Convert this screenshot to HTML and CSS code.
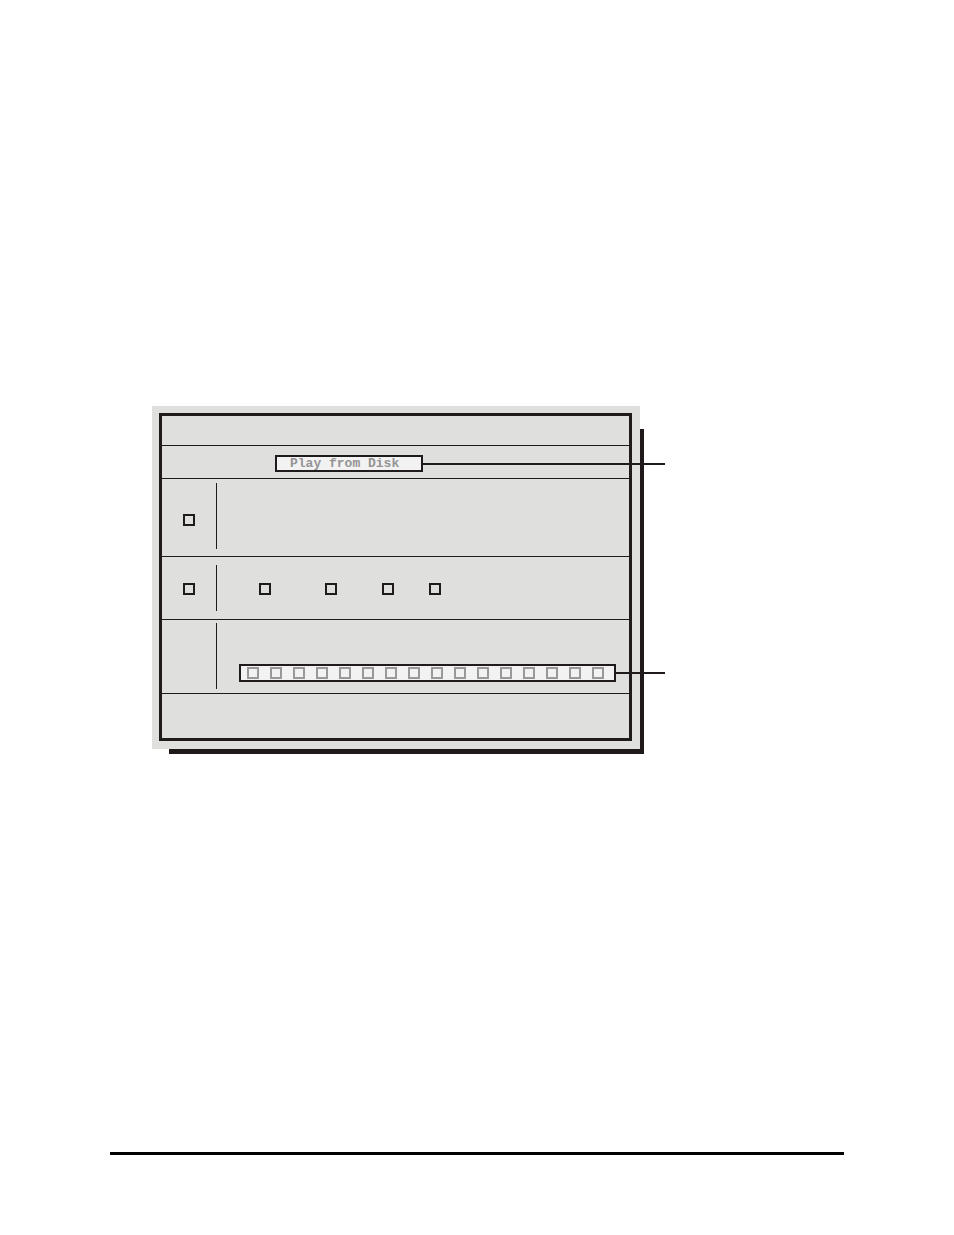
FILE: index.html
```html
<!DOCTYPE html>
<html lang="en">
<head>
    <meta charset="UTF-8">
    <meta name="viewport" content="width=device-width, initial-scale=1.0">
    <title>Play from Disk</title>
    <link rel="stylesheet" href="styles.css">
</head>
<body>
    <main class="page">
        <div class="screen">
            <form class="frame">
                <div class="row header"></div>

                <div class="row mode">
                    <input class="mode-name" type="text" value="Play from Disk" aria-label="Mode">
                    <span class="callout"></span>
                </div>

                <div class="row source">
                    <div class="side"><input class="box" type="checkbox" aria-label="Source"></div>
                </div>

                <div class="row options">
                    <div class="side"><input class="box" type="checkbox" aria-label="Options"></div>
                    <div class="choices">
                        <input class="box" type="checkbox" aria-label="Option 1">
                        <input class="box" type="checkbox" aria-label="Option 2">
                        <input class="box" type="checkbox" aria-label="Option 3">
                        <input class="box" type="checkbox" aria-label="Option 4">
                    </div>
                </div>

                <div class="row tracks">
                    <div class="side"></div>
                    <div class="track-line">
                        <div class="strip">
                            <input class="box light" type="checkbox" aria-label="Track 1">
                            <input class="box light" type="checkbox" aria-label="Track 2">
                            <input class="box light" type="checkbox" aria-label="Track 3">
                            <input class="box light" type="checkbox" aria-label="Track 4">
                            <input class="box light" type="checkbox" aria-label="Track 5">
                            <input class="box light" type="checkbox" aria-label="Track 6">
                            <input class="box light" type="checkbox" aria-label="Track 7">
                            <input class="box light" type="checkbox" aria-label="Track 8">
                            <input class="box light" type="checkbox" aria-label="Track 9">
                            <input class="box light" type="checkbox" aria-label="Track 10">
                            <input class="box light" type="checkbox" aria-label="Track 11">
                            <input class="box light" type="checkbox" aria-label="Track 12">
                            <input class="box light" type="checkbox" aria-label="Track 13">
                            <input class="box light" type="checkbox" aria-label="Track 14">
                            <input class="box light" type="checkbox" aria-label="Track 15">
                            <input class="box light" type="checkbox" aria-label="Track 16">
                        </div>
                        <span class="callout"></span>
                    </div>
                </div>

                <div class="row status"></div>
            </form>
        </div>
        <hr class="page-rule">
    </main>
</body>
</html>
```

FILE: styles.css
```css
* {
    box-sizing: border-box;
}
body {
    margin: 0;
    background: #fff;
    font-family: "Liberation Mono", "Courier New", monospace;
}
.page {
    padding: 406px 110px 80px;
}

/* panel with the offset shadow behind it */
.screen {
    position: relative;
    isolation: isolate;
    max-width: 488px;
    margin-left: 42px;
    padding: 7px 8px 8px 7px;
}
.screen::before {
    content: "";
    position: absolute;
    z-index: -2;
    top: 23px;
    right: -4px;
    bottom: -5px;
    left: 17px;
    background: #1f1a19;
}
.screen::after {
    content: "";
    position: absolute;
    z-index: -1;
    inset: 0;
    background: #dfdfdd;
}
.frame {
    margin: 0;
    border: 3px solid #1f1a1b;
}
.row {
    display: flex;
    border-bottom: 1px solid #1f1a1b;
}
.header {
    min-height: 30px;
}
.mode {
    min-height: 33px;
    align-items: center;
    padding: 3px 0 0 113px;
}
.mode-name {
    width: 148px;
    height: 17px;
    padding: 0 0 0 13px;
    border: 2px solid #1f1a1b;
    border-radius: 0;
    background: #f2f2f2;
    color: #949494;
    font: bold 13px/13px "Liberation Mono", "Courier New", monospace;
}

/* leader line running out past the panel edge */
.callout {
    flex: 1;
    height: 2px;
    margin-right: -36px;
    background: #1f1a1b;
}
.source {
    min-height: 78px;
    padding: 4px 0 7px;
}
.options {
    min-height: 63px;
    padding: 8px 0;
}
.tracks {
    min-height: 74px;
    padding: 3px 0 4px;
}
.status {
    min-height: 44px;
    border-bottom: 0;
}
.side {
    display: flex;
    flex: none;
    align-items: center;
    justify-content: center;
    width: 55px;
    border-right: 1px solid #1f1a1b;
}
.box {
    appearance: none;
    flex: none;
    width: 12px;
    height: 12px;
    margin: 0;
    border: 2px solid #1f1a1b;
    border-radius: 0;
}
.box.light {
    border-color: #999;
}
.source .side {
    padding-top: 7px;
}
.options .side,
.choices {
    padding-top: 2px;
}
.choices {
    display: grid;
    grid-template-columns: 66px 57px 47px 12px;
    align-items: center;
    margin-left: 42px;
}
.track-line {
    display: flex;
    flex: 1;
    align-items: center;
    align-self: flex-end;
    margin: 0 0 7px 22px;
}
.strip {
    display: flex;
    flex: none;
    align-items: center;
    justify-content: space-between;
    width: 377px;
    height: 18px;
    padding: 0 10px 0 6px;
    border: 2px solid #1f1a1b;
    background: #f2f2f2;
}
.page-rule {
    height: 3px;
    margin: 403px 0 0;
    border: 0;
    background: #000;
}
```
